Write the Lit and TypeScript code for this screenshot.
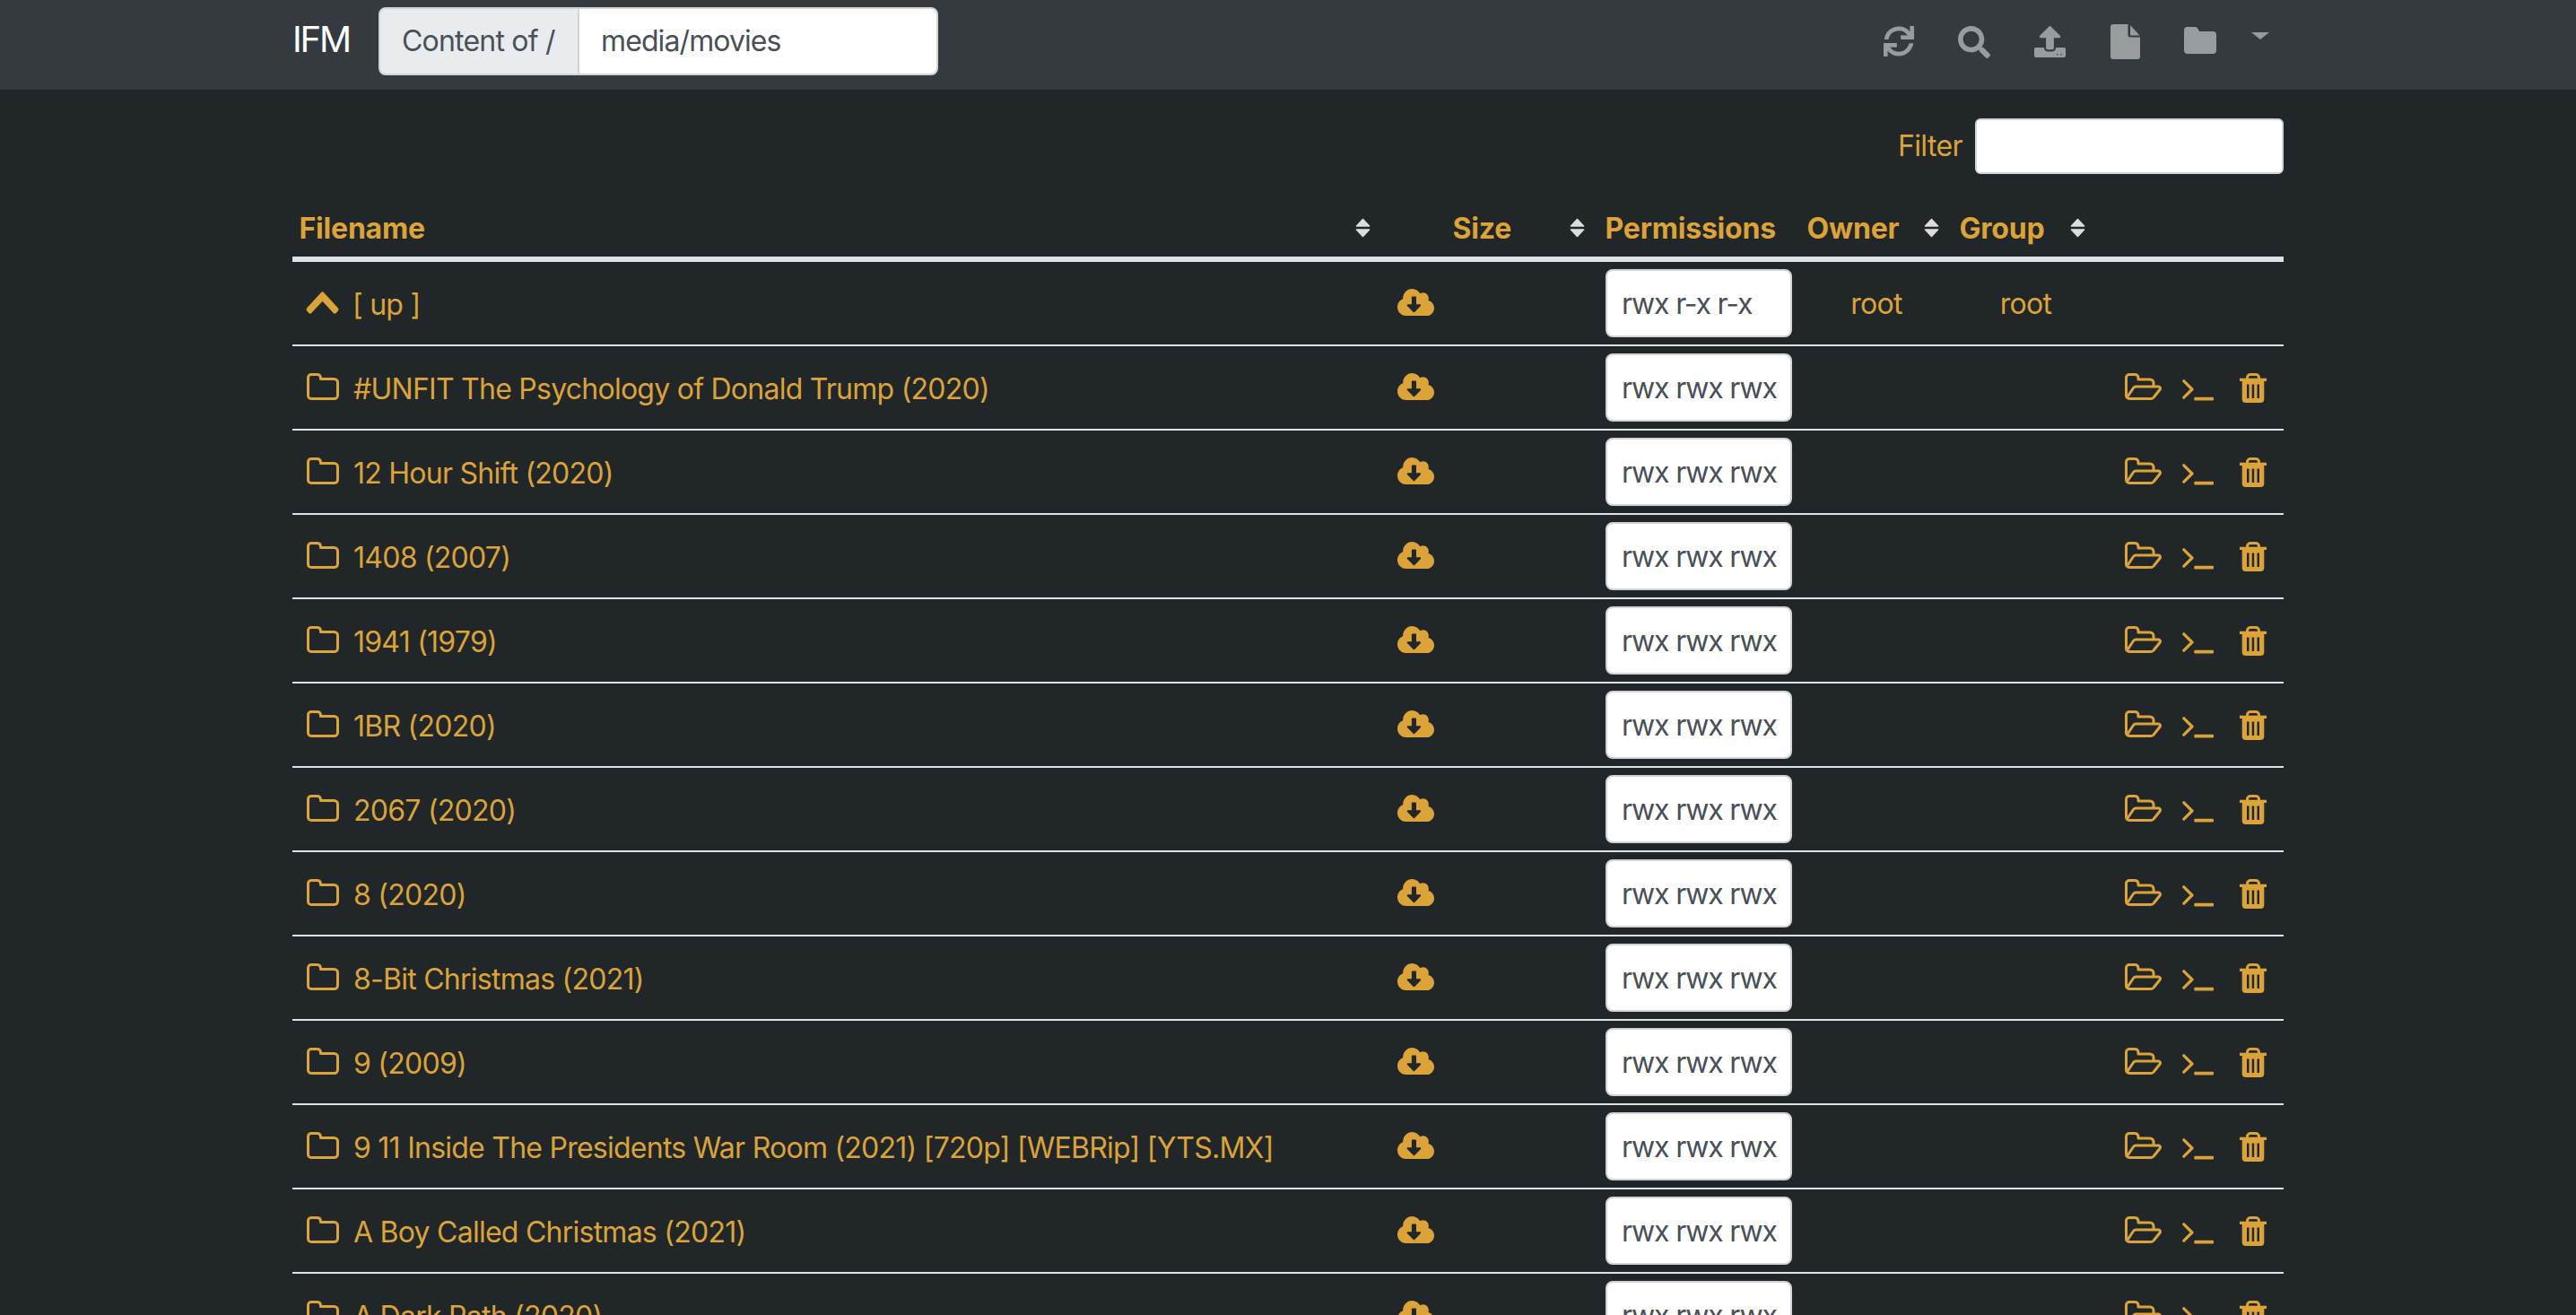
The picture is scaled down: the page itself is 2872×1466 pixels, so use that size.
import { LitElement, css, html, svg } from "lit";
import { customElement } from "lit/decorators.js";

const movies = [
  "#UNFIT The Psychology of Donald Trump (2020)",
  "12 Hour Shift (2020)",
  "1408 (2007)",
  "1941 (1979)",
  "1BR (2020)",
  "2067 (2020)",
  "8 (2020)",
  "8-Bit Christmas (2021)",
  "9 (2009)",
  "9 11 Inside The Presidents War Room (2021) [720p] [WEBRip] [YTS.MX]",
  "A Boy Called Christmas (2021)",
  "A Dark Path (2020)",
];

const refreshIcon = html`<svg class="nav-icon refresh" viewBox="0 0 512 512"><path d="M440.65 12.57l4 82.77A247.16 247.16 0 0 0 255.83 8C134.73 8 33.91 94.92 12.29 209.82A12 12 0 0 0 24.09 224h49.05a12 12 0 0 0 11.67-9.26 175.91 175.91 0 0 1 317-56.94l-101.46-4.86a12 12 0 0 0-12.57 12v47.41a12 12 0 0 0 12 12H500a12 12 0 0 0 12-12V12a12 12 0 0 0-12-12h-47.37a12 12 0 0 0-11.98 12.57zM255.83 432a175.61 175.61 0 0 1-146-77.8l101.8 4.87a12 12 0 0 0 12.57-12v-47.4a12 12 0 0 0-12-12H12a12 12 0 0 0-12 12V500a12 12 0 0 0 12 12h47.35a12 12 0 0 0 12-12.6l-4.15-82.57A247.17 247.17 0 0 0 255.83 504c121.11 0 221.93-86.92 243.55-201.82a12 12 0 0 0-11.8-14.18h-49.05a12 12 0 0 0-11.67 9.26A175.86 175.86 0 0 1 255.83 432z"/></svg>`;
const searchIcon = html`<svg class="nav-icon search" viewBox="0 0 512 512"><path d="M505 442.7L405.3 343c-4.5-4.5-10.6-7-17-7H372c27.6-35.3 44-79.7 44-128C416 93.1 322.9 0 208 0S0 93.1 0 208s93.1 208 208 208c48.3 0 92.7-16.4 128-44v16.3c0 6.4 2.5 12.5 7 17l99.7 99.7c9.4 9.4 24.6 9.4 33.9 0l28.3-28.3c9.4-9.4 9.4-24.6.1-34zM208 336c-70.7 0-128-57.2-128-128 0-70.7 57.2-128 128-128 70.7 0 128 57.2 128 128 0 70.7-57.2 128-128 128z"/></svg>`;
const uploadIcon = html`<svg class="nav-icon upload" viewBox="0 0 512 512"><path d="M296 384h-80c-13.3 0-24-10.7-24-24V192h-87.7c-17.8 0-26.7-21.5-14.1-34.1L242.3 5.7c7.5-7.5 19.8-7.5 27.3 0l152.2 152.2c12.6 12.6 3.7 34.1-14.1 34.1H320v168c0 13.3-10.7 24-24 24zm216-8v112c0 13.3-10.7 24-24 24H24c-13.3 0-24-10.7-24-24V376c0-13.3 10.7-24 24-24h136v8c0 30.9 25.1 56 56 56h80c30.9 0 56-25.1 56-56v-8h136c13.3 0 24 10.7 24 24zm-124 88c0-6-5-11-11-11s-11 5-11 11 5 11 11 11 11-5 11-11zm64 0c0-6-5-11-11-11s-11 5-11 11 5 11 11 11 11-5 11-11z"/></svg>`;
const fileIcon = html`<svg class="nav-icon file" viewBox="0 0 33 39"><path d="M19.5 0H3a3 3 0 0 0-3 3v33a3 3 0 0 0 3 3h27a3 3 0 0 0 3-3V14.500H22a2.500 2.500 0 0 1-2.500-2.500z"/><path d="M22 1l10.500 11.500H22z"/></svg>`;
const folderFilled = html`<svg class="nav-icon folder" viewBox="0 0 36 30"><path d="M4 0h8a4 4 0 0 1 3.300 1.700L17 5h15a4 4 0 0 1 4 4v17a4 4 0 0 1-4 4H4a4 4 0 0 1-4-4V4a4 4 0 0 1 4-4z"/></svg>`;

const sortIcon = html`<svg class="sort" viewBox="0 0 17 22"><path d="M8.500 1.500L15.500 9H1.500z"/><path d="M1.500 13H15.500L8.500 20.500z"/></svg>`;
const chevronUp = html`<svg class="chevron" viewBox="5 123 438 265" preserveAspectRatio="none"><path d="M240.971 130.524l194.343 194.343c9.373 9.373 9.373 24.569 0 33.941l-22.667 22.667c-9.357 9.357-24.522 9.375-33.901.04L224 227.495 69.255 381.516c-9.379 9.335-24.544 9.317-33.901-.04l-22.667-22.667c-9.373-9.373-9.373-24.569 0-33.941L207.03 130.525c9.372-9.373 24.568-9.373 33.941-.001z"/></svg>`;
const folderOutline = html`<svg class="folder-line" viewBox="0 0 36 30"><path d="M5 1.500h6.500a4 4 0 0 1 4 3.500v1.500H30.500a4 4 0 0 1 4 4V24.500a4 4 0 0 1-4 4H5a3.500 3.500 0 0 1-3.500-3.500V5A3.500 3.500 0 0 1 5 1.500z"/></svg>`;
const cloudDownload = html`<svg class="cloud" viewBox="0 32 640 448" preserveAspectRatio="none"><path d="M537.6 226.6c4.1-10.700 6.400-22.400 6.400-34.600 0-53-43-96-96-96-19.700 0-38.100 6-53.300 16.200C367 64.200 315.300 32 256 32c-88.400 0-160 71.600-160 160 0 2.700.1 5.400.2 8.100C40.200 219.800 0 273.200 0 336c0 79.500 64.500 144 144 144h368c70.700 0 128-57.300 128-128 0-61.900-44-113.600-102.400-125.400zm-132.900 88.700L299.300 420.700c-6.200 6.200-16.400 6.200-22.600 0L171.300 315.300c-10.100-10.100-2.900-27.300 11.300-27.300H248V176c0-8.800 7.200-16 16-16h48c8.800 0 16 7.200 16 16v112h65.400c14.200 0 21.400 17.200 11.300 27.300z"/></svg>`;
const folderOpen = html`<svg class="folder-open" viewBox="0 0 41 30"><path d="M1.500 25V5A3.500 3.500 0 0 1 5 1.500h6a4 4 0 0 1 4 3.500v2H28a4 4 0 0 1 4 4V14.500"/><path d="M2.500 27l7-10.500a3.500 3.500 0 0 1 3-1.500H37.500a2 2 0 0 1 1.600 3.200l-7 8.800a3.500 3.500 0 0 1-2.800 1.500H5A3.500 3.500 0 0 1 1.500 25"/></svg>`;
const terminal = html`<svg class="terminal" viewBox="0 0 35 24"><path class="prompt" d="M1.800 1.800L11 11 1.800 20.200"/><rect x="13.300" y="19.800" width="21.700" height="3.600" rx="1"/></svg>`;
const trash = html`<svg class="trash" viewBox="0 0 30 33"><path class="handle" d="M8.500 6V5A3.500 3.500 0 0 1 12 1.500h6A3.500 3.500 0 0 1 21.500 5V6"/><rect y="5.700" width="30" height="3.300"/>${svg`<path fill-rule="evenodd" d="M2.700 9H27.300V29a4 4 0 0 1-4 4H6.700a4 4 0 0 1-4-4zM8 12.500V28h2.500V12.500zM13.700 12.500V28h2.500V12.500zM19.500 12.500V28H22V12.500z"/>`}</svg>`;

@customElement("app-root")
export class AppRoot extends LitElement {
  static styles = css`
    :host {
      display: block;
      height: 100vh;
      overflow: hidden;
      background: #212629;
      color: #dba338;
      font-family: Inter, "Noto Sans", sans-serif;
      font-size: 32px;
      line-height: 48px;
      letter-spacing: -0.75px;
    }
    svg {
      display: block;
      flex: none;
      fill: currentColor;
    }
    input {
      font: inherit;
      letter-spacing: inherit;
      color: #495057;
      background: #fff;
      border: 2px solid #ced4da;
      box-sizing: border-box;
      outline: none;
    }

    .navbar {
      height: 100px;
      background: #343a3e;
    }
    .bar-inner {
      box-sizing: border-box;
      width: 2280px;
      height: 100%;
      margin: 0 auto;
      padding: 8px 30px 0;
      display: flex;
      align-items: flex-start;
    }
    .brand {
      width: 96px;
      color: #fff;
      font-size: 40px;
      line-height: 72px;
      letter-spacing: -2.2px;
    }
    .path-group {
      display: flex;
      width: 624px;
      height: 76px;
    }
    .path-label {
      box-sizing: border-box;
      width: 224px;
      padding: 0 24px;
      line-height: 72px;
      letter-spacing: -0.8px;
      color: #495057;
      background: #e9ecef;
      border: 2px solid #ced4da;
      border-radius: 8px 0 0 8px;
      white-space: nowrap;
    }
    .path-input {
      flex: 1;
      min-width: 0;
      padding: 0 24px;
      margin-left: -2px;
      letter-spacing: -0.9px;
      border-radius: 0 8px 8px 0;
    }
    .nav-links {
      margin-left: auto;
      display: flex;
      align-items: flex-start;
      color: #999c9f;
    }
    .nav-link {
      width: 84px;
      height: 60px;
      display: flex;
      justify-content: center;
      align-items: center;
      margin-top: 8px;
      margin-right: 0;
    }
    .refresh { width: 34px; height: 34px; }
    .search { width: 36px; height: 36px; margin-top: 2px; }
    .upload { width: 35px; height: 35px; }
    .file { width: 33px; height: 39px; }
    .folder { width: 36px; height: 30px; margin-top: -2px; }
    .caret {
      width: 0;
      height: 0;
      margin: 28px 16px 0 15px;
      border-top: 8px solid #999c9f;
      border-left: 10px solid transparent;
      border-right: 10px solid transparent;
    }

    .content {
      width: 2220px;
      margin: 0 auto;
      padding-top: 32px;
    }
    .filter {
      display: flex;
      justify-content: flex-end;
      align-items: center;
      gap: 14px;
    }
    .filter label {
      letter-spacing: -0.6px;
    }
    .filter input {
      width: 344px;
      height: 62px;
      border-radius: 6px;
    }
    .row {
      display: grid;
      grid-template-columns: 1217px 69px 170px 225px 170px 163px 206px;
      align-items: center;
    }
    .head {
      height: 92px;
      font-weight: 700;
      letter-spacing: -0.2px;
      border-bottom: 6px solid #dee2e6;
    }
    .th {
      display: flex;
      justify-content: space-between;
      align-items: center;
      padding: 0 15px 0 7.5px;
      margin-top: 30px;
    }
    .sort {
      width: 17px;
      height: 22px;
      fill: #ddd;
      stroke: #ddd;
      stroke-width: 1.6;
      stroke-linejoin: round;
      margin-top: -2px;
    }
    .body-row {
      height: 94px;
      box-sizing: border-box;
      border-bottom: 2px solid #dee2e6;
    }
    .name {
      display: flex;
      align-items: center;
      gap: 16px;
      padding-left: 16px;
      white-space: nowrap;
    }
    .name span {
      padding-top: 3px;
    }
    .chevron {
      width: 35px;
      height: 23px;
      margin-top: -2px;
      overflow: visible;
      stroke: currentColor;
      stroke-width: 12;
      stroke-linejoin: round;
    }
    .folder-line { width: 36px; height: 30px; margin-top: -3px; }
    .folder-line path,
    .folder-open path {
      fill: none;
      stroke: currentColor;
      stroke-width: 3;
      stroke-linejoin: round;
    }
    .dl {
      display: flex;
      justify-content: center;
      padding-left: 2px;
    }
    .cloud { width: 41px; height: 30px; margin-top: -2px; }
    .perm {
      box-sizing: border-box;
      width: 208px;
      height: 76px;
      margin-left: 8px;
      padding-left: 16px;
      line-height: 74px;
      letter-spacing: -1.2px;
      color: #495057;
      background: #fff;
      border: 2px solid #ced4da;
      border-radius: 8px;
      white-space: nowrap;
    }
    .who {
      text-align: center;
      padding-top: 2px;
    }
    .actions {
      display: flex;
      justify-content: flex-end;
      align-items: center;
      padding-right: 19px;
    }
    .folder-open { width: 41px; height: 30px; margin-top: -3px; }
    .terminal { width: 35px; height: 24px; margin: 6px 0 0 23px; }
    .prompt {
      fill: none;
      stroke: currentColor;
      stroke-width: 3.2;
      stroke-linecap: round;
      stroke-linejoin: round;
    }
    .trash { width: 30px; height: 33px; margin-left: 29px; }
    .handle {
      fill: none;
      stroke: currentColor;
      stroke-width: 3;
    }
  `;

  private headCell(label: string) {
    return html`<div class="th"><span>${label}</span>${sortIcon}</div>`;
  }

  render() {
    return html`
      <nav class="navbar">
        <div class="bar-inner">
          <span class="brand">IFM</span>
          <div class="path-group">
            <span class="path-label">Content of /</span>
            <input class="path-input" .value=${"media/movies"} />
          </div>
          <div class="nav-links">
            <a class="nav-link">${refreshIcon}</a>
            <a class="nav-link">${searchIcon}</a>
            <a class="nav-link">${uploadIcon}</a>
            <a class="nav-link">${fileIcon}</a>
            <a class="nav-link">${folderFilled}</a>
            <span class="caret"></span>
          </div>
        </div>
      </nav>
      <main class="content">
        <div class="filter">
          <label>Filter</label>
          <input />
        </div>
        <div class="row head">
          ${this.headCell("Filename")}
          <div></div>
          ${this.headCell("Size")}
          <div class="th"><span>Permissions</span></div>
          ${this.headCell("Owner")}
          ${this.headCell("Group")}
          <div></div>
        </div>
        <div class="row body-row">
          <div class="name">${chevronUp}<span>[ up ]</span></div>
          <div class="dl">${cloudDownload}</div>
          <div></div>
          <div><div class="perm">rwx r-x r-x</div></div>
          <div class="who">root</div>
          <div class="who">root</div>
          <div></div>
        </div>
        ${movies.map(
          (name) => html`
            <div class="row body-row">
              <div class="name">${folderOutline}<span>${name}</span></div>
              <div class="dl">${cloudDownload}</div>
              <div></div>
              <div><div class="perm">rwx rwx rwx</div></div>
              <div></div>
              <div></div>
              <div class="actions">${folderOpen}${terminal}${trash}</div>
            </div>
          `
        )}
      </main>
    `;
  }
}
